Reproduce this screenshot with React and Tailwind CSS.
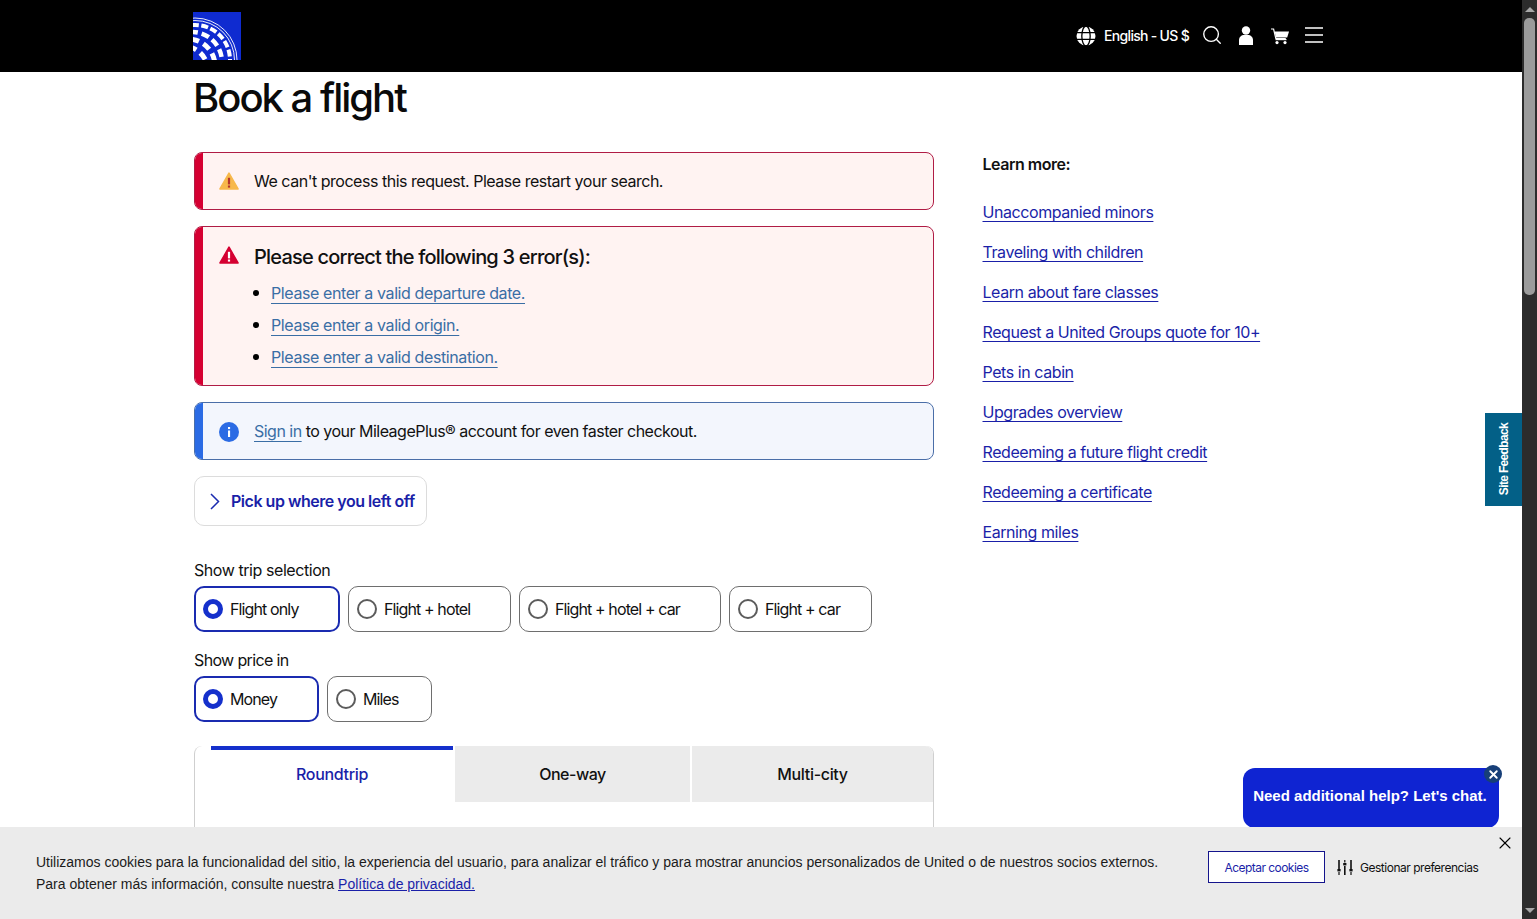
import React from 'react';
import { Search, X } from 'lucide-react';

const learnLinks = [
  'Unaccompanied minors',
  'Traveling with children',
  'Learn about fare classes',
  'Request a United Groups quote for 10+',
  'Pets in cabin',
  'Upgrades overview',
  'Redeeming a future flight credit',
  'Redeeming a certificate',
  'Earning miles',
];

const errors = [
  'Please enter a valid departure date.',
  'Please enter a valid origin.',
  'Please enter a valid destination.',
];

const Logo = () => (
  <svg width="48" height="48" viewBox="0 0 48 48" className="block">
    <rect width="48" height="48" fill="#0f2bd0" />
    <g fill="none" stroke="#fff">
      <circle cx="2" cy="48" r="42" strokeWidth="0.9" />
      <circle cx="2" cy="48" r="39.5" strokeWidth="0.9" />
      <circle cx="2" cy="48" r="35" strokeWidth="4" strokeDasharray="7 2.5" />
      <circle cx="-1" cy="50" r="30" strokeWidth="4.5" strokeDasharray="8 4" strokeDashoffset="5" />
      <circle cx="-5" cy="54" r="27" strokeWidth="5" strokeDasharray="8 5" />
      <circle cx="-10" cy="59" r="25" strokeWidth="5" strokeDasharray="8 5" strokeDashoffset="7" />
    </g>
  </svg>
);

const GlobeIcon = () => (
  <svg width="20" height="20" viewBox="0 0 20 20" className="block">
    <circle cx="10" cy="10" r="9.5" fill="#fff" />
    <g fill="none" stroke="#000" strokeWidth="1.3">
      <path d="M0 6.6h20M0 13.4h20" />
      <ellipse cx="10" cy="10" rx="4.2" ry="10" />
    </g>
  </svg>
);

const UserIcon = () => (
  <svg width="16" height="19" viewBox="0 0 16 19" className="block">
    <circle cx="8" cy="4.5" r="4.2" fill="#fff" />
    <path d="M1 19v-5c0-3 2.5-5 5-5h4c2.5 0 5 2 5 5v5z" fill="#fff" />
  </svg>
);

const CartIcon = () => (
  <svg width="18" height="17" viewBox="0 0 18 17" className="block">
    <path d="M0 1h2.6l2.2 9.5h10" fill="none" stroke="#fff" strokeWidth="1.2" />
    <path d="M3.6 3.5H18l-1.8 6H5z" fill="#fff" />
    <rect x="4.5" y="11" width="11" height="1.2" fill="#fff" />
    <circle cx="6" cy="14.6" r="1.6" fill="#fff" />
    <circle cx="14" cy="14.6" r="1.6" fill="#fff" />
  </svg>
);

const MenuIcon = () => (
  <svg width="18" height="16" viewBox="0 0 18 16" className="block">
    <path d="M0 1h18M0 8h18M0 15h18" stroke="#fff" strokeWidth="1.5" />
  </svg>
);

const ChevronIcon = () => (
  <svg width="10" height="17" viewBox="0 0 10 17" className="block shrink-0">
    <path d="M1 1l7.5 7.5L1 16" fill="none" stroke="#1a2bb0" strokeWidth="1.5" />
  </svg>
);

const WarningIcon = ({ fill, mark }) => (
  <svg width="20" height="18" viewBox="0 0 20 18" className="block">
    <path d="M10 1.2 19 17H1z" fill={fill} stroke={fill} strokeWidth="1.6" strokeLinejoin="round" />
    <rect x="8.9" y="5.8" width="2.2" height="6.6" fill={mark} />
    <rect x="8.9" y="13.5" width="2.2" height="2.1" fill={mark} />
  </svg>
);

const InfoIcon = () => (
  <svg width="20" height="20" viewBox="0 0 20 20" className="block">
    <circle cx="10" cy="10" r="10" fill="#2b6be4" />
    <rect x="9" y="8.5" width="2.1" height="6.5" fill="#fff" />
    <rect x="9" y="5" width="2.1" height="2.1" fill="#fff" />
  </svg>
);

const SlidersIcon = () => (
  <svg width="16" height="15" viewBox="0 0 16 15" className="block">
    <g fill="#111">
      <rect x="1.2" y="0" width="1.6" height="9" />
      <rect x="0.4" y="9" width="3.2" height="2.4" />
      <rect x="1.4" y="12" width="1.2" height="3" />
      <rect x="7.2" y="0" width="1.2" height="2.5" />
      <rect x="6.2" y="3" width="3.2" height="2.4" />
      <rect x="7" y="6" width="1.6" height="9" />
      <rect x="13.2" y="0" width="1.6" height="9" />
      <rect x="12.4" y="9" width="3.2" height="2.4" />
      <rect x="13.4" y="12" width="1.2" height="3" />
    </g>
  </svg>
);

const Alert = ({ tone, icon, children, className }) => (
  <div className={`flex rounded-lg border overflow-hidden ${tone === 'info' ? 'border-[#4a6ea8] bg-[#f3f6fd]' : 'border-[#b01c45] bg-[#fff3f2]'} ${className}`}>
    <div className={`w-2 shrink-0 ${tone === 'info' ? 'bg-[#2b6be4]' : 'bg-[#d50032]'}`} />
    <div className="flex-1 flex pl-4">
      <div className="w-[35px] shrink-0 pt-[19px]">{icon}</div>
      <div className="flex-1">{children}</div>
    </div>
  </div>
);

const Radio = ({ label, checked, width }) => (
  <div className={`h-[46px] ${width} flex items-center gap-[7px] rounded-[10px] bg-white ${checked ? 'pl-[7px] border-2 border-[#1a2bb0]' : 'pl-[8px] border border-[#6e6e6e]'}`}>
    {checked ? (
      <span className="w-5 h-5 rounded-full border-[5px] border-[#1530cc] bg-white shrink-0" />
    ) : (
      <span className="w-5 h-5 rounded-full border-2 border-[#5c5c5c] bg-white shrink-0" />
    )}
    <span className="text-[16px] text-[#111] tracking-[-0.055em]">{label}</span>
  </div>
);

const Scrollbar = () => (
  <div className="w-[15px] shrink-0 bg-[#2c2c2c] flex flex-col items-center pt-[7px]">
    <span className="w-0 h-0 border-x-[5px] border-x-transparent border-b-[5px] border-b-[#a8a8a8]" />
    <div className="w-[11px] h-[277px] mt-[6px] rounded-[5px] bg-[#9b9b9b]" />
    <span className="mt-auto mb-[6px] w-0 h-0 border-x-[5px] border-x-transparent border-t-[5px] border-t-[#a8a8a8]" />
  </div>
);

export default function App() {
  return (
    <div className="h-[919px] flex overflow-hidden bg-white text-[#111] font-['Inter',sans-serif]">
      <div className="relative flex-1 min-w-0 overflow-hidden">
        <header className="h-[72px] bg-black flex items-center justify-between pl-[193px] pr-[199px]">
          <Logo />
          <div className="flex items-center text-white">
            <GlobeIcon />
            <span className="ml-[8px] -mt-[2px] text-[14px] font-medium tracking-[-0.05em] whitespace-nowrap">English - US $</span>
            <Search size={22} strokeWidth={1.5} className="ml-[12px] -mt-[3px]" />
            <span className="ml-[15px] -mt-[1px]"><UserIcon /></span>
            <span className="ml-[17px] mt-[1px]"><CartIcon /></span>
            <span className="ml-[16px] -mt-[2px]"><MenuIcon /></span>
          </div>
        </header>

        <div className="pl-[194px] flex">
          <main className="w-[740px] shrink-0">
            <h1 className="pt-[1px] -ml-[1px] text-[40px] leading-[50px] font-medium text-[#0a0a0a] tracking-[-0.05em]">Book a flight</h1>

            <Alert tone="error" className="mt-[29px] h-[58px]" icon={<WarningIcon fill="#f7b84b" mark="#b5342c" />}>
              <p className="text-[16px] leading-[56px] tracking-[-0.03em]">We can't process this request. Please restart your search.</p>
            </Alert>

            <Alert tone="error" className="mt-4 h-[160px]" icon={<WarningIcon fill="#d50032" mark="#fff" />}>
              <h2 className="mt-[15px] text-[20px] leading-[30px] font-medium tracking-[-0.04em]">Please correct the following 3 error(s):</h2>
              <ul className="mt-[5px] -ml-[1px]">
                {errors.map((err) => (
                  <li key={err} className="h-8 flex items-center gap-3 text-[16px] tracking-[-0.025em]">
                    <span className="w-[6px] h-[6px] rounded-full bg-black shrink-0" />
                    <a href="#" className="text-[#3a6ea5] underline underline-offset-[4px] decoration-1">{err}</a>
                  </li>
                ))}
              </ul>
            </Alert>

            <Alert tone="info" className="mt-4 h-[58px]" icon={<InfoIcon />}>
              <p className="text-[16px] leading-[56px] tracking-[-0.032em]">
                <a href="#" className="text-[#3a6ea5] underline underline-offset-[4px] decoration-1">Sign in</a> to your MileagePlus® account for even faster checkout.
              </p>
            </Alert>

            <button className="mt-4 w-[233px] h-[50px] flex items-center rounded-[10px] border border-[#dcdcdc] bg-white pl-[15px]">
              <ChevronIcon />
              <span className="ml-[11px] text-[16px] font-semibold text-[#1a1fa8] tracking-[-0.03em] whitespace-nowrap">Pick up where you left off</span>
            </button>

            <div className="mt-[32px] text-[16px] leading-6 tracking-[-0.027em]">Show trip selection</div>
            <div className="mt-1 flex gap-2">
              <Radio label="Flight only" checked width="w-[146px]" />
              <Radio label="Flight + hotel" width="w-[163px]" />
              <Radio label="Flight + hotel + car" width="w-[202px]" />
              <Radio label="Flight + car" width="w-[143px]" />
            </div>

            <div className="mt-4 text-[16px] leading-6 tracking-[-0.04em]">Show price in</div>
            <div className="mt-1 flex gap-2">
              <Radio label="Money" checked width="w-[125px]" />
              <Radio label="Miles" width="w-[105px]" />
            </div>

            <div className="mt-6 h-[300px] rounded-t-lg border-x border-[#cfcfcf]">
              <div className="flex h-14">
                <div className="ml-4 w-[242px] border-t-4 border-[#1530cc] bg-white text-center leading-[48px] text-[16px] font-medium text-[#1a1fa8] tracking-[-0.02em]">Roundtrip</div>
                <div className="ml-[2px] w-[235px] bg-[#ebebeb] text-center leading-[56px] text-[16px] font-medium tracking-[-0.03em]">One-way</div>
                <div className="ml-[2px] flex-1 bg-[#ebebeb] rounded-tr-lg text-center leading-[56px] text-[16px] font-medium tracking-[-0.02em]">Multi-city</div>
              </div>
            </div>
          </main>

          <aside className="ml-[48.5px] pt-[80px]">
            <div className="h-[28px] text-[16px] leading-6 font-semibold tracking-[-0.03em]">Learn more:</div>
            <nav className="mt-[12px] flex flex-col">
              {learnLinks.map((link) => (
                <a key={link} href="#" className="h-10 leading-10 text-[16px] text-[#1a1fa8] underline underline-offset-[3px] tracking-[-0.027em] whitespace-nowrap">{link}</a>
              ))}
            </nav>
          </aside>
        </div>

        <a href="#" className="absolute left-[1485px] top-[413px] w-[37px] h-[93px] bg-[#036087] flex items-center justify-center">
          <span className="[writing-mode:vertical-rl] rotate-180 text-white text-[12px] font-bold tracking-[-0.055em] whitespace-nowrap font-['Liberation_Sans',sans-serif]">Site Feedback</span>
        </a>

        <div className="absolute left-[1243px] top-[768px] w-[256px] h-[60px] rounded-xl bg-[#0f24d2] text-white flex items-center justify-center pb-[4px] pr-[2px]">
          <span className="text-[15px] font-bold whitespace-nowrap font-['Liberation_Sans',sans-serif]">Need additional help? Let's chat.</span>
          <span className="absolute -right-[3px] -top-[3px] w-[18px] h-[18px] rounded-full bg-[#173f78] flex items-center justify-center">
            <X size={13} strokeWidth={3.5} />
          </span>
        </div>

        <section className="absolute left-0 right-0 bottom-0 h-[92px] bg-[#ebebeb] flex">
          <div className="pl-[36px] pt-[24px] w-[1172px] box-content shrink-0 text-[14px] leading-[22px] text-[#1b1b1b] font-['Liberation_Sans',sans-serif]">
            <p>Utilizamos cookies para la funcionalidad del sitio, la experiencia del usuario, para analizar el tráfico y para mostrar anuncios personalizados de United o de nuestros socios externos.</p>
            <div className="flex gap-[4px]">
              <span>Para obtener más información, consulte nuestra</span>
              <a href="#" className="text-[#1a1fa8] underline">Política de privacidad.</a>
            </div>
          </div>
          <div className="flex items-start pt-[24px]">
            <button className="w-[117px] h-8 pt-[1px] border border-[#14148c] bg-white text-[12px] text-[#1a1fa8] tracking-[-0.045em]">Aceptar cookies</button>
            <span className="ml-[12px] mt-[9px]"><SlidersIcon /></span>
            <span className="ml-[7px] mt-[9px] text-[12px] leading-4 tracking-[-0.04em] whitespace-nowrap">Gestionar preferencias</span>
          </div>
          <X size={20} strokeWidth={1.3} className="absolute left-[1495px] top-[6px] text-black" />
        </section>
      </div>
      <Scrollbar />
    </div>
  );
}
